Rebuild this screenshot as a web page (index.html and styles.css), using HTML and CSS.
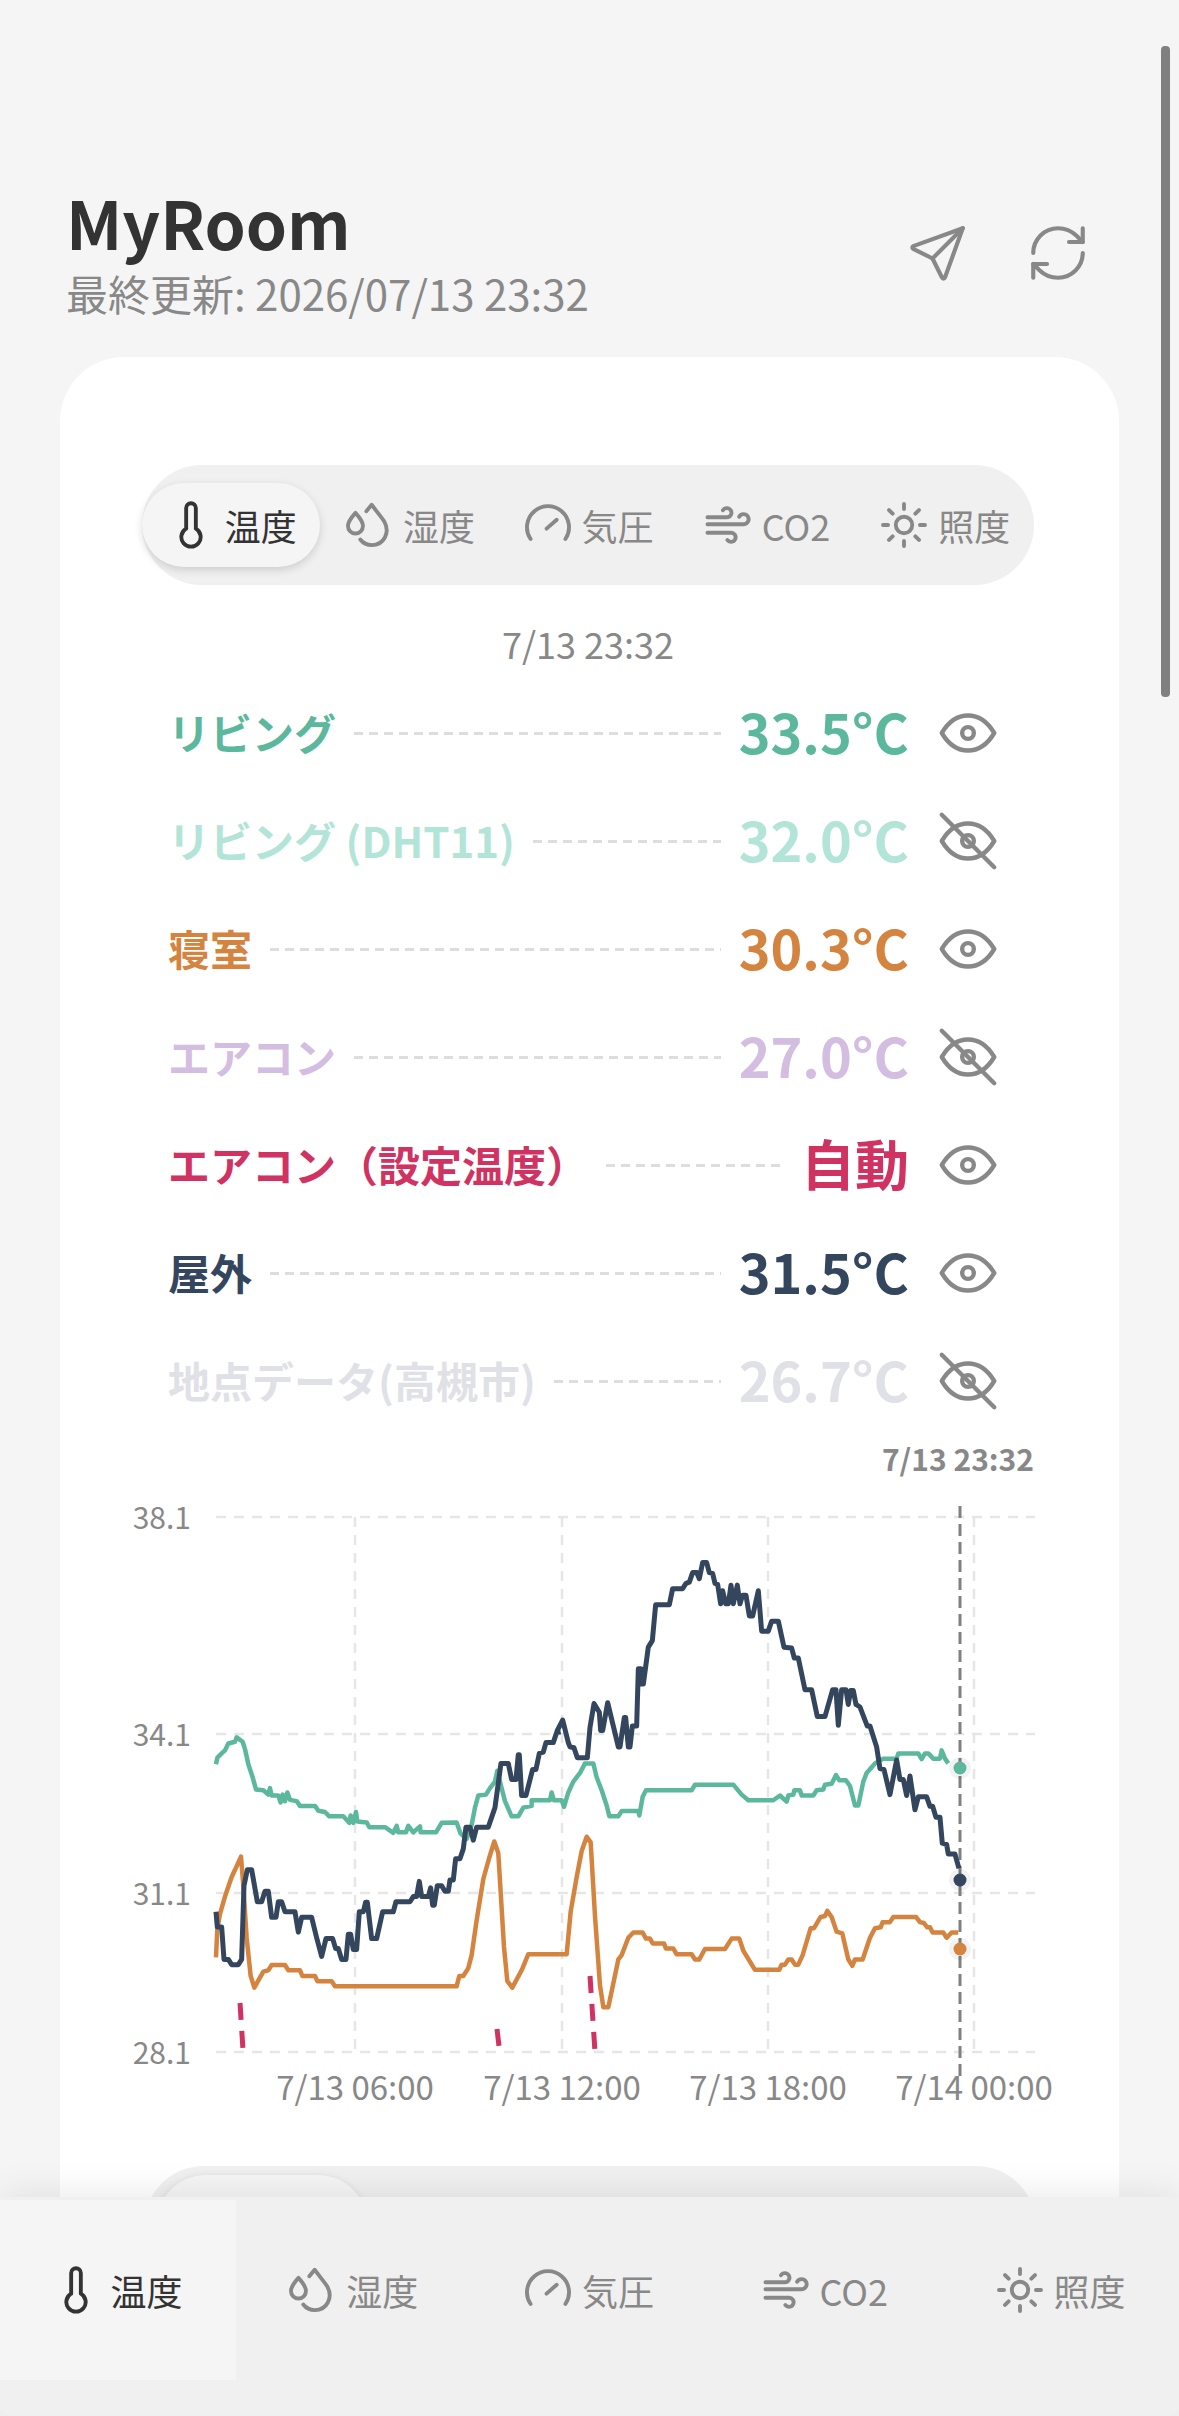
FILE: index.html
```html
<!DOCTYPE html>
<html lang="ja">
<head>
    <meta charset="UTF-8">
    <meta name="viewport" content="width=device-width, initial-scale=1.0">
    <title>MyRoom</title>
    <link rel="stylesheet" href="styles.css">
</head>
<body>

    <!-- Icon set -->
    <svg class="icon-sprite">
        <symbol id="i-temp" viewBox="0 0 24 24"><path d="M10 13.500a4 4 0 1 0 4 0v-8.500a2 2 0 0 0 -4 0v8.500"/></symbol>
        <symbol id="i-drop" viewBox="0 0 24 24"><path d="M6.400 7c-1.800 2-3.100 3.900-3.100 5.400a3.100 3.100 0 0 0 6.200 0c0-1.500-1.300-3.400-3.100-5.400z"/><path d="M10.900 6.300l2.200-2.700c1.800 2.500 3.600 4.600 5.200 6.900c2.600 4.700-.2 9.800-5.100 9.800c-1.900 0-3.600-.7-4.800-2.300"/></symbol>
        <symbol id="i-gauge" viewBox="0 0 24 24"><path d="M4.800 17.800a8.700 8.700 0 1 1 14.400 0"/><path d="M11.400 13.500l4.200-3.700"/></symbol>
        <symbol id="i-wind" viewBox="0 0 24 24"><path d="M3.500 8.800H11.500a1.900 1.900 0 1 0-1.600-2.900"/><path d="M3.500 11.700H18.600a2.100 2.100 0 1 0-2-3.100"/><path d="M3.500 15.200H13.100a1.900 1.900 0 1 1-1.400 3"/></symbol>
        <symbol id="i-sun" viewBox="0 0 24 24"><circle cx="12" cy="12" r="3.400"/><path d="M12 3.300v2.100M12 18.600v2.100M3.300 12h2.100M18.600 12h2.100M5.800 5.800l1.500 1.500M16.700 16.700l1.500 1.500M18.200 5.800l-1.500 1.500M7.300 16.700l-1.500 1.500"/></symbol>
        <symbol id="i-eye" viewBox="0 0 24 24"><path d="M10 12a2 2 0 1 0 4 0a2 2 0 0 0 -4 0"/><path d="M21 12c-2.400 4 -5.400 6 -9 6c-3.600 0 -6.600 -2 -9 -6c2.400 -4 5.400 -6 9 -6c3.600 0 6.600 2 9 6"/></symbol>
        <symbol id="i-eye-off" viewBox="0 0 24 24"><path d="M10 12a2 2 0 1 0 4 0a2 2 0 0 0 -4 0"/><path d="M21 12c-2.400 4 -5.400 6 -9 6c-3.600 0 -6.600 -2 -9 -6c2.400 -4 5.400 -6 9 -6c3.600 0 6.600 2 9 6"/><path d="M3 3l18 18"/></symbol>
    </svg>

    <!-- Header -->
    <header class="page-header">
        <div>
            <h1 class="room-title">MyRoom</h1>
            <p class="room-updated">最終更新: 2026/07/13 23:32</p>
        </div>
        <div class="header-actions">
            <svg class="icon icon-action" viewBox="0 0 24 24"><path d="M10 14l11 -11"/><path d="M21 3l-6.500 18a.55 .55 0 0 1 -1 0l-3.500 -7l-7 -3.500a.55 .55 0 0 1 0 -1l18 -6.500"/></svg>
            <svg class="icon icon-action" viewBox="0 0 24 24"><path d="M3 12a9 9 0 0 1 9-9 9.750 9.750 0 0 1 6.740 2.740L21 8"/><path d="M21 3v5h-5"/><path d="M21 12a9 9 0 0 1-9 9 9.750 9.750 0 0 1-6.740-2.740L3 16"/><path d="M8 16H3v5"/></svg>
        </div>
    </header>

    <!-- Main card -->
    <main class="card">
        <div class="tabs">
            <div class="tab tab-active">
                <svg class="icon icon-tab"><use href="#i-temp"/></svg>
                <span>温度</span>
            </div>
            <div class="tab">
                <svg class="icon icon-tab"><use href="#i-drop"/></svg>
                <span>湿度</span>
            </div>
            <div class="tab">
                <svg class="icon icon-tab"><use href="#i-gauge"/></svg>
                <span>気圧</span>
            </div>
            <div class="tab">
                <svg class="icon icon-tab"><use href="#i-wind"/></svg>
                <span>CO2</span>
            </div>
            <div class="tab">
                <svg class="icon icon-tab"><use href="#i-sun"/></svg>
                <span>照度</span>
            </div>
        </div>

        <p class="reading-time">7/13 23:32</p>

        <!-- Current readings -->
        <ul class="readings">
            <li class="reading c-teal">
                <span class="reading-name">リビング</span><span class="reading-line"></span><span class="reading-value">33.5°C</span>
                <svg class="icon icon-eye"><use href="#i-eye"/></svg>
            </li>
            <li class="reading c-mint">
                <span class="reading-name">リビング (DHT11)</span><span class="reading-line"></span><span class="reading-value">32.0°C</span>
                <svg class="icon icon-eye"><use href="#i-eye-off"/></svg>
            </li>
            <li class="reading c-orange">
                <span class="reading-name">寝室</span><span class="reading-line"></span><span class="reading-value">30.3°C</span>
                <svg class="icon icon-eye"><use href="#i-eye"/></svg>
            </li>
            <li class="reading c-lilac">
                <span class="reading-name">エアコン</span><span class="reading-line"></span><span class="reading-value">27.0°C</span>
                <svg class="icon icon-eye"><use href="#i-eye-off"/></svg>
            </li>
            <li class="reading c-rose">
                <span class="reading-name">エアコン（設定温度）</span><span class="reading-line"></span><span class="reading-value">自動</span>
                <svg class="icon icon-eye"><use href="#i-eye"/></svg>
            </li>
            <li class="reading c-navy">
                <span class="reading-name">屋外</span><span class="reading-line"></span><span class="reading-value">31.5°C</span>
                <svg class="icon icon-eye"><use href="#i-eye"/></svg>
            </li>
            <li class="reading c-fog">
                <span class="reading-name">地点データ(高槻市)</span><span class="reading-line"></span><span class="reading-value">26.7°C</span>
                <svg class="icon icon-eye"><use href="#i-eye-off"/></svg>
            </li>
        </ul>

        <!-- Chart: coordinates are page pixels -->
        <svg class="chart" viewBox="60 1430 1060 690">
            <text class="tick-strong" x="1034" y="1472" text-anchor="end">7/13 23:32</text>

            <g class="grid">
                <path d="M216 1518H1035M216 1735H1035M216 1894H1035M216 2053H1035"/>
                <path d="M355 1518V2053M562 1518V2053M768 1518V2053M974 1518V2053"/>
            </g>

            <g class="tick">
                <text x="191" y="1530" text-anchor="end">38.1</text>
                <text x="191" y="1747" text-anchor="end">34.1</text>
                <text x="191" y="1906" text-anchor="end">31.1</text>
                <text x="191" y="2065" text-anchor="end">28.1</text>
                <text class="tick-x" x="355" y="2101" text-anchor="middle">7/13 06:00</text>
                <text class="tick-x" x="562" y="2101" text-anchor="middle">7/13 12:00</text>
                <text class="tick-x" x="768" y="2101" text-anchor="middle">7/13 18:00</text>
                <text class="tick-x" x="974" y="2101" text-anchor="middle">7/14 00:00</text>
            </g>

            <path class="cursor" d="M960 1507V2077"/>

            <!-- set temperature: only the moments it changed -->
            <path class="series series-rose" d="M240 2004L243 2051M497 2030L499 2047M590 1977L595 2053"/>

            <g transform="translate(100 1440) scale(.3333 .4337)">
                <polyline class="series series-teal" points="348,750 352,735 365,725 375,718 385,702 405,698 410,688 428,698 435,715 445,750 458,780 468,808 490,810 505,820 510,805 515,822 535,822 542,838 548,820 555,835 562,815 570,832 590,835 600,846 645,846 655,857 675,860 688,870 730,870 748,885 752,868 760,885 768,860 772,882 800,884 808,895 855,895 880,908 890,892 895,907 918,907 925,892 940,907 960,893 962,907 1008,907 1025,885 1070,884 1082,910 1100,922 1115,890 1125,850 1135,822 1158,820 1170,805 1185,790 1192,765 1200,790 1215,835 1235,870 1255,870 1270,850 1295,846 1295,833 1350,833 1355,815 1362,833 1380,833"/>
                <polyline class="series series-orange" points="348,1195 352,1130 360,1095 375,1055 395,1010 410,985 423,963 430,1030 440,1150 452,1238 463,1265 490,1228 505,1225 515,1213 555,1213 565,1225 600,1225 607,1238 645,1238 652,1250 695,1250 705,1262 1070,1262 1078,1238 1090,1238 1105,1220 1115,1190 1130,1110 1150,1015 1168,965 1183,928 1195,955 1212,1170 1222,1250 1237,1265 1265,1225 1285,1188 1380,1188"/>
                <polyline class="series series-navy" points="348,1090 352,1125 365,1125 372,1200 385,1200 395,1212 415,1212 425,1200 432,1030 442,993 455,993 472,1067 485,1067 495,1043 505,1043 515,1103 528,1103 535,1067 545,1067 555,1090 585,1090 595,1137 605,1103 635,1103 650,1150 665,1193 678,1152 698,1152 707,1175 715,1175 725,1200 738,1200 745,1142 752,1142 760,1177 770,1177 778,1090 790,1090 797,1068 802,1068 815,1152 830,1152 848,1090 880,1090 888,1067 930,1067 940,1055 950,1055 958,1020 965,1055 985,1055 992,1035 998,1075 1003,1075 1012,1030 1025,1030 1035,1043 1045,1043 1050,1017 1060,1017 1067,968 1080,968 1090,945 1098,895 1110,895 1120,925 1130,895 1165,895 1185,850 1203,748 1225,748 1235,785 1248,785 1255,728 1258,728 1265,822 1278,822 1298,762 1308,762 1318,725 1330,722 1338,700 1360,700 1370,677 1382,675"/>
            </g>
            <g transform="translate(560 1440) scale(.3333 .4337)">
                <polyline class="series series-teal" points="0,833 5,833 12,848 25,815 40,790 60,770 75,748 100,748 110,780 125,810 140,845 148,870 175,870 185,858 235,858 238,868 248,825 258,810 395,810 405,797 520,797 545,820 565,833 640,833 660,822 680,836 685,822 700,820 703,810 720,810 725,822 760,822 770,810 790,808 795,797 815,795 828,775 838,787 858,787 870,800 885,845 895,845 910,790 920,770 945,748 970,737 1010,737 1015,725 1075,725 1085,738 1095,725 1105,725 1120,737 1140,737 1145,718 1155,737 1165,748"/>
                <polyline class="series series-orange" points="0,1188 20,1188 32,1090 50,1010 65,950 80,917 92,930 105,1100 120,1260 130,1310 145,1310 175,1200 185,1190 205,1150 220,1138 248,1138 258,1152 270,1152 278,1163 312,1163 318,1175 340,1175 350,1188 395,1188 405,1200 418,1200 435,1176 495,1176 515,1152 538,1152 550,1180 585,1224 658,1224 665,1212 675,1212 685,1200 695,1200 705,1212 715,1212 728,1190 752,1128 762,1128 782,1102 795,1100 802,1088 815,1102 830,1136 847,1140 865,1200 877,1215 885,1200 908,1200 930,1150 945,1128 962,1126 968,1114 990,1114 1000,1102 1068,1102 1080,1114 1092,1116 1102,1126 1110,1126 1118,1138 1150,1138 1160,1150 1175,1138 1195,1138"/>
                <polyline class="series series-navy" points="-13,675 -10,675 8,648 25,700 30,710 42,712 52,735 82,735 90,665 102,610 118,630 122,672 128,672 143,608 175,710 180,710 193,642 197,642 205,710 210,710 217,662 230,662 235,530 243,530 245,565 250,565 265,480 277,465 287,382 328,382 338,345 368,345 378,333 388,330 398,308 410,308 418,322 428,285 440,285 448,308 458,310 465,333 473,335 482,380 488,350 497,380 505,380 513,337 520,380 532,337 540,380 548,360 558,360 568,408 578,408 595,350 605,443 625,443 635,420 655,420 672,480 695,482 703,505 715,505 735,578 755,578 772,640 795,640 818,578 828,578 835,660 845,578 858,578 865,612 872,580 880,580 888,612 900,618 922,662 930,662 950,710 960,760 972,762 990,820 1010,740 1020,785 1030,785 1040,822 1050,777 1065,855 1075,825 1100,825 1110,847 1118,847 1128,872 1140,872 1147,932 1160,935 1165,957 1185,957 1197,990"/>
            </g>

            <circle class="dot-halo" cx="960" cy="1769" r="11"/>
            <circle class="dot-teal" cx="960" cy="1769" r="6.5"/>
            <circle class="dot-halo" cx="960" cy="1881" r="11"/>
            <circle class="dot-navy" cx="960" cy="1881" r="6.5"/>
            <circle class="dot-halo" cx="960" cy="1950" r="11"/>
            <circle class="dot-orange" cx="960" cy="1950" r="6.5"/>
        </svg>

        <!-- Next panel, mostly under the bottom bar -->
        <div class="tabs tabs-next">
            <div class="tab tab-active"></div>
        </div>
    </main>

    <!-- Bottom navigation -->
    <nav class="bottom-nav">
        <div class="nav-item nav-item-active">
            <svg class="icon icon-tab"><use href="#i-temp"/></svg>
            <span>温度</span>
        </div>
        <div class="nav-item">
            <svg class="icon icon-tab"><use href="#i-drop"/></svg>
            <span>湿度</span>
        </div>
        <div class="nav-item">
            <svg class="icon icon-tab"><use href="#i-gauge"/></svg>
            <span>気圧</span>
        </div>
        <div class="nav-item">
            <svg class="icon icon-tab"><use href="#i-wind"/></svg>
            <span>CO2</span>
        </div>
        <div class="nav-item">
            <svg class="icon icon-tab"><use href="#i-sun"/></svg>
            <span>照度</span>
        </div>
    </nav>

    <div class="scroll-thumb"></div>

</body>
</html>
```

FILE: styles.css
```css
* {
    box-sizing: border-box;
}

body {
    position: relative;
    height: 2416px;
    margin: 0;
    overflow: hidden;
    background-color: #f5f5f5;
    font-family: "Noto Sans CJK JP", "Noto Sans", sans-serif;
    color: #333;
}

.icon-sprite {
    display: none;
}

.icon {
    fill: none;
    stroke: currentColor;
    stroke-width: 1.5;
    stroke-linecap: round;
    stroke-linejoin: round;
    flex-shrink: 0;
}

/* Header */
.page-header {
    display: flex;
    justify-content: space-between;
    align-items: center;
    padding: 181px 88px 0 66px;
}

.room-title {
    margin: 0;
    font-size: 66px;
    line-height: 80px;
    font-weight: 700;
}

.room-updated {
    margin: 6px 0 0;
    font-size: 42px;
    line-height: 52px;
    color: #888;
}

.header-actions {
    display: flex;
    gap: 54px;
    margin-top: 6px;
    color: #888;
}

.icon-action {
    width: 66px;
    height: 66px;
}

/* Card */
.card {
    margin: 38px 60px 0;
    padding: 108px 83px 0 80px;
    height: 1900px;
    background-color: #fff;
    border-radius: 64px;
}

.tabs {
    display: flex;
    align-items: center;
    height: 120px;
    margin: 0 2px;
    background-color: #f0f0f0;
    border-radius: 60px;
}

.tab {
    flex: 1;
    display: flex;
    align-items: center;
    justify-content: center;
    gap: 5px;
    height: 84px;
    padding-right: 4px;
    border-radius: 42px;
    font-size: 36px;
    color: #888;
}

.tab-active {
    background-color: #f5f5f5;
    color: #333;
    box-shadow: 0 3px 8px rgba(0, 0, 0, 0.15);
}

.icon-tab {
    width: 58px;
    height: 58px;
    stroke-width: 1.6;
}

.reading-time {
    margin: 33px 0 0;
    text-align: center;
    font-size: 36px;
    line-height: 50px;
    color: #888;
}

/* Readings */
.readings {
    list-style: none;
    margin: 11px 0 0;
    padding: 0;
}

.reading {
    display: flex;
    align-items: center;
    height: 108px;
    padding: 0 33px 0 28px;
}

.reading-name {
    margin-bottom: 3px;
    font-size: 42px;
    font-weight: 700;
    white-space: nowrap;
}

.reading-line {
    flex: 1;
    height: 3px;
    margin: 0 18px;
    background-image: repeating-linear-gradient(90deg, #ddd 0 9px, transparent 9px 15px);
}

.reading-value {
    margin-bottom: 5px;
    font-size: 54px;
    font-weight: 700;
    white-space: nowrap;
}

.icon-eye {
    width: 70px;
    height: 70px;
    margin-left: 24px;
    color: #888;
}

.c-teal { color: #5bb89c; }
.c-mint { color: #b2e4d8; }
.c-orange { color: #d4843e; }
.c-lilac { color: #d3bde0; }
.c-rose { color: #d03262; }
.c-navy { color: #34465e; }
.c-fog { color: #e0e1e6; }

/* Chart */
.chart {
    display: block;
    width: 1060px;
    height: 690px;
    margin: -6px 0 0 -80px;
}

.grid path {
    fill: none;
    stroke: #e6e6e6;
    stroke-width: 2.5;
    stroke-dasharray: 10 8;
}

.tick {
    font-size: 30px;
    fill: #888;
}

.tick-x {
    font-size: 33px;
}

.tick-strong {
    font-size: 30px;
    font-weight: 700;
    fill: #888;
}

.cursor {
    fill: none;
    stroke: #808080;
    stroke-width: 3;
    stroke-dasharray: 12 6;
}

.series {
    fill: none;
    stroke-width: 4.5;
    stroke-linejoin: round;
    vector-effect: non-scaling-stroke;
}

.series-teal { stroke: #5bb89c; }
.series-orange { stroke: #d4843e; }
.series-navy {
    stroke: #34465e;
    stroke-width: 5;
}
.series-rose {
    stroke: #d03262;
    stroke-width: 5;
    stroke-dasharray: 17 11;
}

.dot-halo { fill: rgba(0, 0, 0, 0.05); }
.dot-teal { fill: #5bb89c; }
.dot-orange { fill: #d4843e; }
.dot-navy { fill: #34465e; }

.tabs-next {
    width: 892px;
    margin: 47px 0 0 4px;
    padding: 9px 12px;
    align-items: flex-start;
}

.tabs-next .tab {
    flex: 0 0 212px;
    height: 100px;
    border-radius: 50px;
}

/* Bottom navigation */
.bottom-nav {
    position: absolute;
    left: 0;
    right: 0;
    bottom: 0;
    height: 219px;
    display: flex;
    padding: 3px 0 36px;
    background-color: #f0f0f0;
    border-radius: 0 0 10px 10px;
    box-shadow: 0 0 40px rgba(0, 0, 0, 0.1);
}

.nav-item {
    flex: 1;
    display: flex;
    align-items: center;
    justify-content: center;
    gap: 5px;
    padding-right: 6px;
    font-size: 36px;
    color: #888;
}

.nav-item-active {
    background-color: #f5f5f5;
    color: #333;
}

.scroll-thumb {
    position: absolute;
    top: 46px;
    left: 1161px;
    width: 9px;
    height: 651px;
    background-color: #808080;
    border-radius: 4px;
}
```
